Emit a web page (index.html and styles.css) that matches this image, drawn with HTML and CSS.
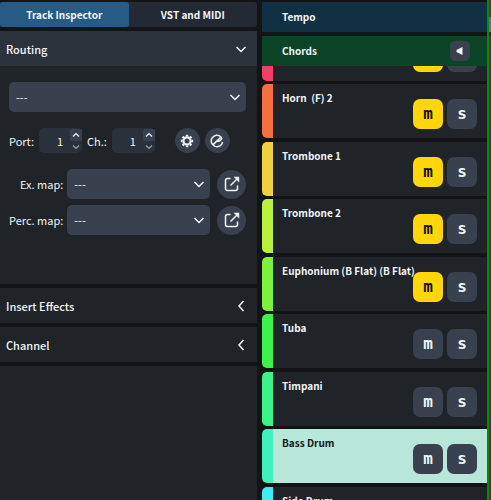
FILE: index.html
```html
<!DOCTYPE html>
<html lang="en">
<head>
<meta charset="utf-8">
<title>Track Inspector</title>
<link rel="stylesheet" href="styles.css">
</head>
<body>
<svg class="defs" aria-hidden="true">
  <symbol id="down" viewBox="0 0 12 12"><path d="M1.500 4 6 8.500l4.500-4.500"/></symbol>
  <symbol id="left" viewBox="0 0 12 12"><path d="M8.500 1 4 6l4.500 5"/></symbol>
  <symbol id="open" viewBox="0 0 16 16"><path d="M6.500 2.500H3.500Q1.500 2.500 1.500 4.500V12.500Q1.500 14.500 3.500 14.500H11.500Q13.500 14.500 13.500 12.500V9.500M6.500 9.500 13 3"/><path class="fill" d="M9.500.800H15.200V6.500Z"/></symbol>
</svg>
<div class="app">
  <aside class="inspector">
    <nav class="tabs">
      <button class="tab active">Track Inspector</button>
      <button class="tab">VST and MIDI</button>
    </nav>
    <section class="panel">
      <button class="panel-head open">Routing <svg class="icon"><use href="#down"/></svg></button>
      <div class="routing">
        <div class="select"><select aria-label="Output"><option>---</option></select><svg class="icon"><use href="#down"/></svg></div>
        <div class="ports">
          <label for="port">Port:</label>
          <div class="spin"><input id="port" value="1"><span class="steps"><button aria-label="Port up"><svg viewBox="0 0 8 6"><path d="M1 4.500 4 1.500l3 3"/></svg></button><button aria-label="Port down"><svg viewBox="0 0 8 6"><path d="M1 1.500 4 4.500l3-3"/></svg></button></span></div>
          <label for="ch">Ch.:</label>
          <div class="spin"><input id="ch" value="1"><span class="steps"><button aria-label="Channel up"><svg viewBox="0 0 8 6"><path d="M1 4.500 4 1.500l3 3"/></svg></button><button aria-label="Channel down"><svg viewBox="0 0 8 6"><path d="M1 1.500 4 4.500l3-3"/></svg></button></span></div>
          <button class="round small first" aria-label="Settings"><svg viewBox="0 0 14 14"><circle cx="7" cy="7" r="3.600" stroke-width="2.200"/><path stroke-width="2.400" d="M7 .800v1.800M7 11.400v1.800M.800 7h1.800M11.400 7h1.800M2.600 2.600l1.300 1.300M10.100 10.100l1.300 1.300M2.600 11.400l1.300-1.300M10.100 3.900l1.300-1.300"/></svg></button>
          <button class="round small" aria-label="Edit instrument"><svg viewBox="0 0 14 14"><path d="M12.600 7.800A5.700 5.700 0 1 1 11 3Q12.600 4.600 10.300 6.300L8.800 7.300H5.800M3.400 10.400 10.400 3.600"/></svg></button>
        </div>
        <div class="maps">
          <label for="ex">Ex. map:</label>
          <div class="select"><select id="ex"><option>---</option></select><svg class="icon"><use href="#down"/></svg></div>
          <button class="round" aria-label="Open expression map"><svg><use href="#open"/></svg></button>
          <label for="perc">Perc. map:</label>
          <div class="select"><select id="perc"><option>---</option></select><svg class="icon"><use href="#down"/></svg></div>
          <button class="round" aria-label="Open percussion map"><svg><use href="#open"/></svg></button>
        </div>
      </div>
    </section>
    <section class="panel"><button class="panel-head">Insert Effects <svg class="icon"><use href="#left"/></svg></button></section>
    <section class="panel"><button class="panel-head">Channel <svg class="icon"><use href="#left"/></svg></button></section>
    <div class="panel rest"></div>
  </aside>
  <main class="tracks">
    <header class="globals">
      <div class="global tempo">Tempo</div>
      <div class="global chords">Chords <button class="audition" aria-label="Audition chords"><svg viewBox="0 0 8 8"><path class="fill" d="M.500 3 6.500 0V8L.500 5Z"/></svg></button></div>
    </header>
    <div class="viewport">
      <ul class="list">
        <li class="track rose"><span class="name"></span><button class="ms on">m</button><button class="ms">s</button></li>
        <li class="track orange"><span class="name">Horn&nbsp; (F) 2</span><button class="ms on">m</button><button class="ms">s</button></li>
        <li class="track yellow"><span class="name">Trombone 1</span><button class="ms on">m</button><button class="ms">s</button></li>
        <li class="track lime"><span class="name">Trombone 2</span><button class="ms on">m</button><button class="ms">s</button></li>
        <li class="track leaf"><span class="name">Euphonium (B Flat) (B Flat)</span><button class="ms on">m</button><button class="ms">s</button></li>
        <li class="track green"><span class="name">Tuba</span><button class="ms">m</button><button class="ms">s</button></li>
        <li class="track mint"><span class="name">Timpani</span><button class="ms">m</button><button class="ms">s</button></li>
        <li class="track aqua selected"><span class="name">Bass Drum</span><button class="ms">m</button><button class="ms">s</button></li>
        <li class="track cyan"><span class="name">Side Drum</span><button class="ms">m</button><button class="ms">s</button></li>
      </ul>
    </div>
  </main>
  <div class="timeline"></div>
</div>
</body>
</html>
```
FILE: styles.css
```css
* { box-sizing: border-box; }
body { margin: 0; background: #131415; color: #f2f4f5; font: 11px/18px "Noto Sans CJK SC", "Noto Sans", sans-serif; }
button, input, select { font: inherit; color: inherit; border: 0; margin: 0; padding: 0; background: none; }
svg { display: block; fill: none; stroke: currentColor; stroke-width: 1.5; }
.fill { fill: currentColor; stroke: none; }
.defs { position: absolute; width: 0; height: 0; }
.icon { width: 12px; height: 12px; flex: none; }

.app { display: grid; grid-template-columns: 257fr 230fr 4px; height: 100vh; overflow: hidden; }
.inspector { display: flex; flex-direction: column; gap: 4px; padding-top: 2px; min-width: 0; }
.tabs { display: flex; height: 25px; background: #242a33; border-radius: 0 3px 3px 0; }
.tab { flex: 1; font-size: 10px; font-weight: 700; }
.tab.active { background: #265b85; border-radius: 3px; }
.panel { background: #202428; }
.rest { flex: 1; }
.panel-head { display: flex; align-items: center; justify-content: space-between; width: 100%; height: 35px; padding: 0 10px 0 6px; font-weight: 500; text-align: left; }
.panel-head.open { background: #2c323b; }

.routing { padding: 16px 11px 49px 9px; }
.select { position: relative; display: flex; align-items: center; }
.select select { appearance: none; width: 100%; height: 30px; padding: 0 24px 0 7px; background: #38414d; border-radius: 5px; }
.select .icon { position: absolute; right: 5px; pointer-events: none; }
.ports { display: flex; align-items: center; gap: 5px; margin: 16px 0; }
.spin { display: flex; align-items: center; width: 43px; height: 25px; background: #2a313b; border-radius: 5px; }
.spin input { width: 24px; min-width: 0; text-align: right; }
.steps { display: flex; flex-direction: column; margin-left: auto; }
.steps button { display: grid; place-items: center; width: 12px; height: 12px; border-radius: 2px; }
.steps button:first-child { background: #38414d; }
.steps button:last-child { color: #9aa0a6; }
.steps svg { width: 8px; height: 6px; stroke-width: 1.2; }
.round { display: grid; place-items: center; width: 29px; height: 29px; border-radius: 50%; background: #38414d; }
.round svg { width: 16px; height: 16px; }
.round.small { width: 25px; height: 25px; }
.round.small svg { width: 14px; height: 14px; }
.round.first { margin-left: 15px; }
.maps { display: grid; grid-template-columns: auto 1fr auto; align-items: center; gap: 6px 4px; }
.maps label { text-align: right; }
.maps .round { margin-left: 3px; }

.tracks { display: flex; flex-direction: column; padding: 2px 0 0 5px; min-width: 0; overflow: hidden; }
.globals { display: flex; flex-direction: column; gap: 4px; }
.global { display: flex; align-items: center; justify-content: space-between; height: 30px; padding: 0 17px 0 20px; font-size: 10px; font-weight: 700; }
.tempo { background: #123044; }
.chords { background: #0b4427; }
.audition { display: grid; place-items: center; width: 20px; height: 20px; background: #38414d; border-radius: 5px; }
.audition svg { width: 8px; height: 8px; }
.viewport { flex: 1; min-height: 0; overflow: hidden; }
.list { list-style: none; margin: -39px 0 0; padding: 0; }
.track { display: flex; gap: 4px; height: 54px; margin-bottom: 3px; padding: 5px 10px 0 9px; background: #202428; border-left: 11px solid; border-radius: 5px 0 0 5px; }
.track:nth-child(even) { margin-bottom: 4px; }
.name { flex: 1; min-width: 0; color: #f2f4f5; font-size: 10px; font-weight: 700; white-space: nowrap; }
.ms { width: 30px; height: 30px; margin-top: 10px; background: #38414d; color: #f2f4f5; border-radius: 7px; font: bold 16px/28px "DejaVu Sans Mono", monospace; }
.ms.on { background: #ffd60a; color: #101010; }
.selected { background: #b8e6d8; }
.selected .name { color: #10181c; }
.rose { border-color: #f43f62; }
.orange { border-color: #f4703e; }
.yellow { border-color: #f0d03e; }
.lime { border-color: #b8f03e; }
.leaf { border-color: #7cf23e; }
.green { border-color: #3ef24c; }
.mint { border-color: #3ef28a; }
.aqua { border-color: #3ef2bd; }
.cyan { border-color: #3eeef2; }
.timeline { background: linear-gradient(#254a60 17px, #2088c8 17px 32px, #1c2a30 32px 36px, #26424e 36px); border-left: 2px solid #078a07; }
```
